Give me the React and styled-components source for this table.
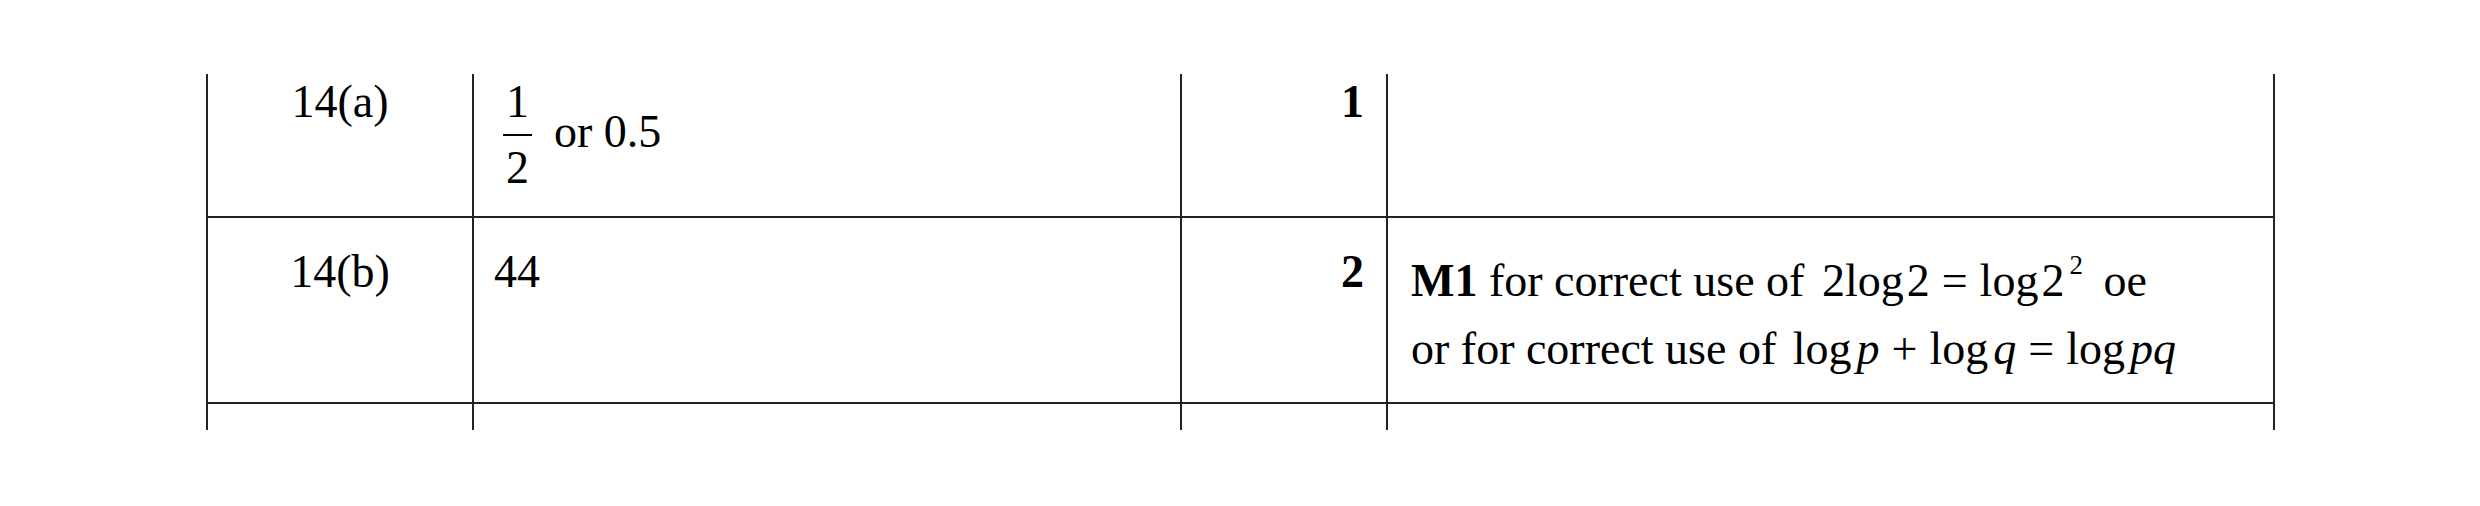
import React from 'react';
import styled, { createGlobalStyle } from 'styled-components';

const LINE = '#222';

const Global = createGlobalStyle`
  html, body { margin: 0; padding: 0; background: #fff; }
  body { font-family: "Liberation Serif", "Times New Roman", serif; color: #000; }
`;

const Sheet = styled.div`
  width: 2480px;
  height: 506px;
  box-sizing: border-box;
  padding: 74px 0 0 206px;
  font-size: 46px;
  line-height: 53px;
`;

const Row = styled.div`
  display: grid;
  grid-template-columns: 266px 708px 206px 889px;
  width: 2069px;
  height: ${p => p.$h}px;
  box-sizing: border-box;
  border-top: ${p => (p.$ruled ? `2px solid ${LINE}` : 'none')};
`;

const Cell = styled.div`
  box-sizing: border-box;
  border-left: 2px solid ${LINE};
  padding-top: ${p => p.$pt || 0}px;
  white-space: nowrap;
  &:last-child { border-right: 2px solid ${LINE}; }
`;

const QCell = styled(Cell)`
  text-align: center;
`;

const AnswerCell = styled(Cell)`
  display: flex;
  align-items: flex-start;
  padding-left: 20px;
`;

const MarkCell = styled(Cell)`
  text-align: right;
  padding-right: 22px;
  font-weight: bold;
`;

const NoteCell = styled(Cell)`
  padding-left: 23px;
  line-height: 62px;
`;

const Frac = styled.span`
  display: inline-flex;
  flex-direction: column;
  align-items: center;
  margin-left: 9px;
`;

const Num = styled.span`
  line-height: 40px;
  padding: 0 3px;
`;

const Bar = styled.span`
  align-self: stretch;
  height: 2px;
  background: #000;
  margin: 12px 0;
`;

const Den = styled.span`
  line-height: 40px;
`;

const Alt = styled.span`
  margin-left: 22px;
  margin-top: 23px;
`;

const NoteLine = styled.div``;

const Eq = styled.span`
  margin-left: ${p => p.$gap}px;
`;

const Fn = styled.span`
  margin-right: ${p => p.$sp ?? 3}px;
`;

const Var = styled.i`
  font-style: italic;
`;

const Op = styled.span`
  margin: 0 12px;
`;

const Sup = styled.span`
  font-size: 27px;
  position: relative;
  top: -22px;
  margin-left: 5px;
`;

const After = styled.span`
  margin-left: 9px;
`;

export default function App() {
  return (
    <>
      <Global />
      <Sheet>
        <Row $h={142}>
          <QCell $pt={1}>14(a)</QCell>
          <AnswerCell $pt={8}>
            <Frac>
              <Num>1</Num>
              <Bar />
              <Den>2</Den>
            </Frac>
            <Alt>or 0.5</Alt>
          </AnswerCell>
          <MarkCell $pt={1}>1</MarkCell>
          <NoteCell />
        </Row>
        <Row $h={186} $ruled>
          <QCell $pt={27}>14(b)</QCell>
          <AnswerCell $pt={27}>44</AnswerCell>
          <MarkCell $pt={27}>2</MarkCell>
          <NoteCell $pt={32}>
            <NoteLine>
              <b>M1</b> for correct use of{' '}
              <Eq $gap={6}>
                2<Fn>log</Fn>2<Op>=</Op><Fn>log</Fn>2<Sup>2</Sup>
              </Eq>{' '}
              <After>oe</After>
            </NoteLine>
            <NoteLine>
              or for correct use of{' '}
              <Eq $gap={5}>
                <Fn $sp={5}>log</Fn><Var>p</Var><Op>+</Op><Fn $sp={5}>log</Fn><Var>q</Var><Op>=</Op><Fn $sp={5}>log</Fn><Var>pq</Var>
              </Eq>
            </NoteLine>
          </NoteCell>
        </Row>
        <Row $h={28} $ruled>
          <Cell />
          <Cell />
          <Cell />
          <Cell />
        </Row>
      </Sheet>
    </>
  );
}
